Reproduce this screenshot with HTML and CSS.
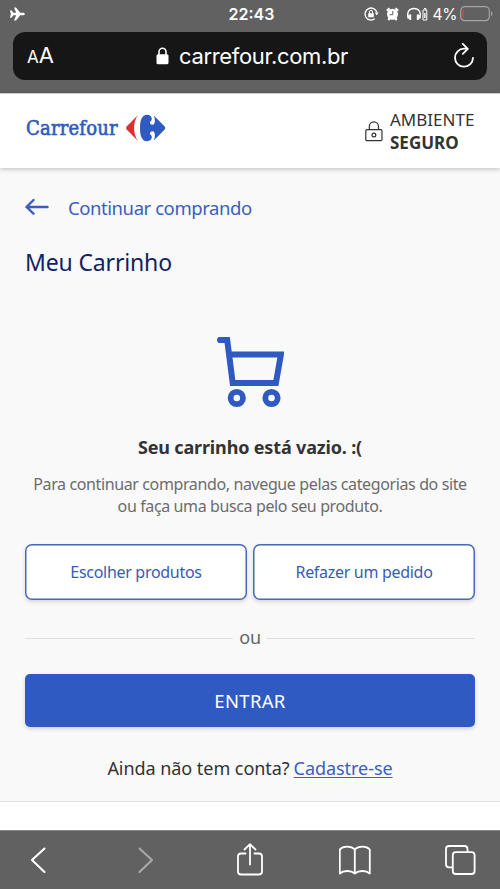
FILE: index.html
```html
<!DOCTYPE html>
<html lang="pt-BR">
<head>
<meta charset="utf-8">
<meta name="viewport" content="width=device-width, initial-scale=1">
<title>Meu Carrinho - Carrefour</title>
<link rel="stylesheet" href="styles.css">
</head>
<body>
<div class="browser-top">
  <div class="status">
    <div class="status-left">
      <svg width="15" height="14" viewBox="0 0 15 14"><path fill="#fff" d="M0 3.200h1.400l2 2.500h2.800L4 .4h2l4.200 5.300h3c1 0 1.600.7 1.600 1.300s-.6 1.300-1.600 1.300h-3L6 13.600H4l2.200-5.300H3.400l-2 2.500H0L.9 7z"/></svg>
    </div>
    <div class="clock">22:43</div>
    <div class="status-right">
      <svg class="rotation" width="15" height="14" viewBox="0 0 15 14"><path d="M12.800 5.200A6 6 0 1 0 10.700 11.800" fill="none" stroke="#fff" stroke-width="1.300"/><path d="M10.700 5.500h4l-2 2.700z" fill="#fff"/><rect x="4.200" y="6.200" width="5.600" height="4" rx=".5" fill="#fff"/><path d="M5.400 6.500V5a1.600 1.600 0 0 1 3.200 0v1.500" fill="none" stroke="#fff"/></svg>
      <svg class="alarm" width="13" height="14" viewBox="0 0 13 14"><circle cx="6.500" cy="7.300" r="5.500" fill="#fff"/><path d="M.9 3.700 3.500 1.300M12.100 3.700 9.500 1.300M2.300 13l1.500-2M10.700 13l-1.500-2" stroke="#fff" stroke-width="2.200"/><path d="M6.800 4v3.700H3.700" fill="none" stroke="#616161" stroke-width="1"/></svg>
      <svg class="headset" width="21" height="14" viewBox="0 0 21 14"><path d="M1.200 11.500C-.5 4.500 2.500 1.500 7 1.500s7.500 3 5.800 10" fill="none" stroke="#fff" stroke-width="1.400"/><path d="M2 7.500h2.200V13H3Q1 12 1 9zM12 7.500H9.800V13H11q2-1 2-4z" fill="#fff"/><path d="M16 3h3.800v10H16zM17 1.500h1.800V3" fill="none" stroke="#fff"/><path d="M17.200 6h1.400v5h-1.400z" fill="#fff"/></svg>
      <span class="percent">4%</span>
      <svg class="battery" width="33" height="16" viewBox="0 0 33 16"><rect x=".7" y=".7" width="28.600" height="14" rx="4" fill="none" stroke="#a4a4a4" stroke-width="1.200"/><path d="M31 5.300c2 1 2 4 0 5z" fill="#a4a4a4"/><path d="M4 3.200v9Q2.500 12 2.500 10.500V5Q2.500 3.500 4 3.200z" fill="#e33b3b"/></svg>
    </div>
  </div>
  <div class="address">
    <div class="text-size"><span class="small-a">A</span><span>A</span></div>
    <div class="domain">
      <svg width="13" height="18" viewBox="0 0 13 18"><rect x=".5" y="7.300" width="12" height="10" rx="1.500" fill="#fff"/><path d="M3 8V4.700a3.500 3.500 0 0 1 7 0V8" fill="none" stroke="#fff" stroke-width="1.600"/></svg>
      <span>carrefour.com.br</span>
    </div>
    <svg class="reload" width="22" height="26" viewBox="0 0 22 26"><path d="M12.500 5.700H11A9 9 0 1 0 20 14.800M9.800.9l5 5-5 4.900" fill="none" stroke="#fff" stroke-width="1.800" stroke-linecap="round" stroke-linejoin="round"/></svg>
  </div>
</div>

<header class="site-header">
  <div class="logo">
    <span class="logo-name">Carrefour</span>
    <svg width="40" height="28" viewBox="0 0 40 28"><path d="M12 1 .8 12.300q-1.300 1.700 0 3.400L12 27C6.800 20.500 6.800 7.500 12 1z" fill="#d93232"/><path d="M14 14C14 5.500 16.300.7 21 .7c3 0 4.800 1.900 4.800 4.200 0 1.200-.6 1.900-1.400 2.300a2.300 2.300 0 1 0 4.200 1.600c.4-2.300.4-4.600-.8-7.300L38.700 12.500q1.300 1.500 0 3L27.800 26.500c1.200-2.700 1.200-5 .8-7.300a2.300 2.300 0 1 0-4.200 1.600c.8.4 1.400 1.100 1.400 2.300 0 2.300-1.800 4.200-4.800 4.200-4.700 0-7-4.800-7-13.300z" fill="#2f5ac1"/></svg>
  </div>
  <div class="secure">
    <svg width="18" height="21" viewBox="0 0 18 21"><g fill="none" stroke="#333" stroke-width="1.200"><rect x=".8" y="8.700" width="16.200" height="11" rx="1.200"/><path d="M4.300 8.700V5.500a4.600 4.600 0 0 1 9.200 0v3.200"/><circle cx="8.900" cy="14" r="1.900"/></g></svg>
    <div class="secure-text"><span class="ambiente">AMBIENTE</span><strong>SEGURO</strong></div>
  </div>
</header>

<main class="cart">
  <a class="back">
    <svg width="24" height="18" viewBox="0 0 24 18"><path d="M22.500 9H1.500M8.500 2l-7 7 7 6.700" fill="none" stroke="#3a5fc0" stroke-width="2.400" stroke-linecap="round" stroke-linejoin="round"/></svg>
    <span>Continuar comprando</span>
  </a>
  <h1>Meu Carrinho</h1>
  <svg class="cart-icon" width="68" height="72" viewBox="0 0 68 72"><g fill="none" stroke="#2f5ac1"><path d="M3.500 4H12l5.500 43h43.200l5-28.500H14" transform="translate(-.8 0)" stroke-width="6"/><path d="M4 4H5" stroke-width="6" stroke-linecap="round"/><circle cx="20.800" cy="62" r="6.200" stroke-width="5.800"/><circle cx="55.500" cy="62" r="6.200" stroke-width="5.800"/></g></svg>
  <h2>Seu carrinho está vazio. :(</h2>
  <p class="hint">Para continuar comprando, navegue pelas categorias do site<br>ou faça uma busca pelo seu produto.</p>
  <div class="actions">
    <button>Escolher produtos</button>
    <button>Refazer um pedido</button>
  </div>
  <div class="divider"><span>ou</span></div>
  <button class="enter">ENTRAR</button>
  <p class="signup"><span>Ainda não tem conta?</span><a>Cadastre-se</a></p>
</main>

<div class="page-rest"></div>
<nav class="toolbar">
  <svg width="32" height="34" viewBox="0 0 32 34"><path d="M21.500 5.500 9 17l12.500 12" fill="none" stroke="#fff" stroke-width="2.100" stroke-linecap="round" stroke-linejoin="round"/></svg>
  <svg width="32" height="34" viewBox="0 0 32 34"><path d="M11.500 5.500 24 17 11.500 29" fill="none" stroke="#a9a9a9" stroke-width="2.100" stroke-linecap="round" stroke-linejoin="round"/></svg>
  <svg width="32" height="34" viewBox="0 0 32 34"><path d="M11.500 10.500H7q-3 0-3 3v15q0 3 3 3h18q3 0 3-3v-15q0-3-3-3h-4.500M16 21.500V1.500M10.500 6.500 16 1.200l5.500 5.300" fill="none" stroke="#fff" stroke-width="1.800" stroke-linecap="round" stroke-linejoin="round"/></svg>
  <svg width="32" height="34" viewBox="0 0 32 34"><path d="M15.800 6.500C12 2.500 4 2.700.8 6.500v24c3.500-3.200 11-3.500 15 0 4-3.500 11.500-3.200 15 0v-24C27.500 2.700 19.500 2.500 15.800 6.500v24" fill="none" stroke="#fff" stroke-width="1.800" stroke-linejoin="round"/></svg>
  <svg width="32" height="34" viewBox="0 0 32 34"><path d="M8.500 24.300H5q-3 0-3-3V6q0-3 3-3h15.500q3 0 3 3v3" fill="none" stroke="#fff" stroke-width="1.800"/><rect x="8.800" y="9.200" width="21.800" height="21.800" rx="3" fill="none" stroke="#fff" stroke-width="1.800"/></svg>
</nav>
</body>
</html>
```
FILE: styles.css
```css
* { box-sizing: border-box; }
body {
  margin: 0;
  width: 500px;
  height: 889px;
  overflow: hidden;
  display: flex;
  flex-direction: column;
  background: #fff;
  color: #333;
  font-family: "Noto Sans", sans-serif;
}
svg { display: block; flex: none; }
button { font: inherit; margin: 0; padding: 0; }

.browser-top {
  height: 93px;
  flex: none;
  background: #616161;
  color: #fff;
  font-family: Inter, sans-serif;
}
.status {
  height: 32px;
  padding: 0 7px 4px 10px;
  display: grid;
  grid-template-columns: 1fr 60px 1fr;
  align-items: center;
}
.clock { text-align: center; font-size: 16px; font-weight: 600; }
.status-right { display: flex; justify-content: flex-end; align-items: center; }
.alarm { margin-left: 7px; }
.headset { margin-left: 8px; }
.percent { font-size: 15.500px; letter-spacing: -.4px; margin: 0 3px 0 5px; }
.address {
  height: 48px;
  margin: 0 13px;
  padding: 0 12px 0 14px;
  border-radius: 12px;
  background: #161616;
  display: grid;
  grid-template-columns: 1fr auto 1fr;
  align-items: center;
}
.text-size { font-size: 22px; line-height: 24px; }
.small-a { font-size: 17px; }
.domain { display: flex; align-items: center; gap: 10px; padding-left: 2px; font-size: 22px; letter-spacing: -.35px; }
.reload { justify-self: end; }

.site-header {
  position: relative;
  height: 75px;
  flex: none;
  padding: 0 25px;
  display: flex;
  align-items: center;
  justify-content: space-between;
  background: #fff;
  border-top: 1px solid #ccc;
  box-shadow: 0 1px 5px rgba(0, 0, 0, .25);
}
.logo { display: flex; align-items: center; gap: 7px; padding: 0 0 6px 1px; color: #2f5ac1; }
.logo-name {
  width: 93px;
  white-space: nowrap;
  font: 20px/28px "DejaVu Serif Condensed", "DejaVu Serif", serif;
  letter-spacing: .2px;
  -webkit-text-stroke: .6px #2f5ac1;
}
.secure { display: flex; align-items: center; gap: 7px; }
.secure-text { width: 85px; font-size: 17px; line-height: 23px; display: grid; padding-bottom: 1px; }

.cart {
  height: 634px;
  flex: none;
  padding: 25px 25px 0;
  display: flex;
  flex-direction: column;
  background: #f9f9f9;
  border-bottom: 1px solid #e2e2e2;
}
.back {
  height: 28px;
  display: flex;
  align-items: center;
  gap: 19px;
  color: #3a5fc0;
  font-size: 18.500px;
  letter-spacing: -.43px;
}
h1 { margin: 23px 0 0; font-size: 23px; line-height: 36px; font-weight: 400; letter-spacing: -.15px; color: #102361; }
.cart-icon { margin: 56px 0 0 191px; }
h2 { margin: 25px 0 0; text-align: center; font-size: 18px; line-height: 28px; font-weight: 700; letter-spacing: -.16px; }
.hint { margin: 13px 0 0; text-align: center; font-size: 16px; line-height: 21.500px; letter-spacing: -.38px; color: #6c6c6c; white-space: nowrap; }
.actions { margin-top: 27px; display: grid; grid-template-columns: 1fr 1fr; gap: 6px; }
.actions button {
  height: 56px;
  border: 0;
  border-radius: 7px;
  background: #fff;
  color: #3a5bb2;
  font-size: 16px;
  letter-spacing: -.3px;
  box-shadow: inset 0 0 0 1.500px #4568b8, 0 2px 4px rgba(0, 0, 0, .14);
}
.divider { height: 24px; margin-top: 25px; display: flex; align-items: center; gap: 6px; font-size: 18px; letter-spacing: -.3px; color: #666; }
.divider::before, .divider::after { content: ""; flex: 1; height: 1px; margin-top: 3px; background: #e2e2e2; }
.enter {
  height: 53px;
  margin-top: 25px;
  border: 0;
  border-radius: 5px;
  background: #2f5ac1;
  color: #fff;
  font-size: 18.500px;
  letter-spacing: .3px;
  box-shadow: 0 2px 4px rgba(0, 0, 0, .16);
}
.signup { margin: 27px 0 0; display: flex; justify-content: center; gap: 4px; font-size: 18px; line-height: 28px; letter-spacing: -.05px; white-space: nowrap; }
.signup a { color: #3a5fc0; text-decoration: underline; text-underline-offset: 2px; text-decoration-thickness: 1px; }

.page-rest { height: 28px; flex: none; }
.toolbar {
  height: 59px;
  flex: none;
  padding: 0 24px 0 23px;
  display: flex;
  justify-content: space-between;
  align-items: center;
  background: #616161;
  border-top: 1px solid #888;
}
```
